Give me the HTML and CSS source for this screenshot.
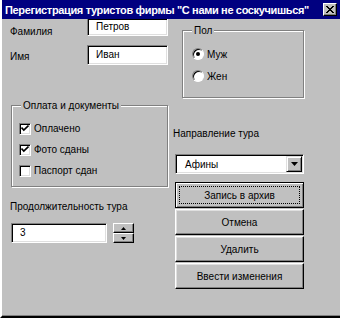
FILE: index.html
```html
<!DOCTYPE html>
<html lang="ru">
<head>
    <meta charset="UTF-8">
    <title>Регистрация туристов</title>
    <link rel="stylesheet" href="styles.css">
</head>
<body>
<div class="window">
    <div class="titlebar">
        <span class="title">Перегистрация туристов фирмы "С нами не соскучишься"</span>
        <span class="close-btn">
            <svg width="8" height="7" viewBox="0 0 8 7"><path d="M0 0 L7 7 M1 0 L8 7 M7 0 L0 7 M8 0 L1 7" stroke="#000" stroke-width="1" fill="none"/></svg>
        </span>
    </div>

    <div class="client">
        <!-- left column -->
        <div class="col-left">
            <div class="row row-surname">
                <span class="label">Фамилия</span>
                <div class="field field-top">Петров</div>
            </div>
            <div class="row row-name">
                <span class="label">Имя</span>
                <div class="field">Иван</div>
            </div>

            <div class="group group-pay">
                <span class="legend">Оплата и документы</span>
                <div class="check-row">
                    <span class="checkbox checked"><svg width="8" height="7" viewBox="0 0 8 7"><path d="M0.5 2.5 L2.8 5 L7.5 0.5" stroke="#000" stroke-width="1.6" fill="none"/></svg></span>
                    <span>Оплачено</span>
                </div>
                <div class="check-row">
                    <span class="checkbox checked"><svg width="8" height="7" viewBox="0 0 8 7"><path d="M0.5 2.5 L2.8 5 L7.5 0.5" stroke="#000" stroke-width="1.6" fill="none"/></svg></span>
                    <span>Фото сданы</span>
                </div>
                <div class="check-row">
                    <span class="checkbox"></span>
                    <span>Паспорт сдан</span>
                </div>
            </div>

            <div class="label label-duration">Продолжительность тура</div>
            <div class="row row-duration">
                <div class="field field-num">3</div>
                <div class="spinner">
                    <span class="spin-btn"><svg width="5" height="3" viewBox="0 0 5 3"><path d="M2.5 0 L5 3 L0 3 Z" fill="#000"/></svg></span>
                    <span class="spin-btn"><svg width="5" height="3" viewBox="0 0 5 3"><path d="M0 0 L5 0 L2.5 3 Z" fill="#000"/></svg></span>
                </div>
            </div>
        </div>

        <!-- right column -->
        <div class="col-right">
            <div class="group group-sex">
                <span class="legend">Пол</span>
                <div class="radio-row">
                    <span class="radio checked"></span>
                    <span>Муж</span>
                </div>
                <div class="radio-row">
                    <span class="radio"></span>
                    <span>Жен</span>
                </div>
            </div>

            <div class="label label-direction">Направление тура</div>
            <div class="select">
                <span class="select-value">Афины</span>
                <span class="select-arrow"><svg width="7" height="4" viewBox="0 0 7 4"><path d="M0 0 L7 0 L3.5 4 Z" fill="#000"/></svg></span>
            </div>

            <div class="buttons">
                <div class="btn btn-default"><span class="focus">Запись в архив</span></div>
                <div class="btn">Отмена</div>
                <div class="btn">Удалить</div>
                <div class="btn">Ввести изменения</div>
            </div>
        </div>
    </div>
</div>
</body>
</html>
```

FILE: styles.css
```css
body {
    margin: 0;
    background: #c0c0c0;
    font-family: 'Liberation Sans', Arial, sans-serif;
    font-size: 10px;
    color: #000;
}

.window {
    width: 340px;
    height: 318px;
    box-sizing: border-box;
    background: #c0c0c0;
    border-left: 2px solid #fff;
    border-bottom: 2px solid #000;
    box-shadow: inset 0 -1px #808080;
    overflow: hidden;
}

.titlebar {
    height: 19px;
    margin-left: -2px;
    background: #000080;
    display: flex;
    align-items: center;
    justify-content: space-between;
    padding: 0 3px 0 5px;
}

.title {
    color: #fff;
    font-weight: bold;
    font-size: 11px;
    letter-spacing: -0.35px;
    white-space: nowrap;
    min-width: 0;
}

.close-btn {
    flex: none;
    width: 14px;
    height: 13px;
    box-sizing: border-box;
    background: #c0c0c0;
    border: 1px solid;
    border-color: #fff #000 #000 #fff;
    box-shadow: inset -1px -1px #808080;
    display: flex;
    align-items: center;
    justify-content: center;
}

.client {
    display: flex;
    gap: 7px;
    padding-left: 8px;
}

.col-left {
    width: 158px;
    display: flex;
    flex-direction: column;
}

.col-right {
    width: 129px;
    display: flex;
    flex-direction: column;
}

.row {
    display: flex;
    align-items: flex-start;
}

.label {
    line-height: 13px;
    white-space: nowrap;
}

.row .label {
    width: 77px;
}

.row-surname .label {
    padding-top: 6px;
}

.row-name {
    margin-top: 7px;
}

.row-name .label {
    padding-top: 5px;
}

/* sunken edit box */
.field {
    width: 81px;
    height: 20px;
    box-sizing: border-box;
    background: #fff;
    border: 1px solid;
    border-color: #808080 #fff #fff #808080;
    box-shadow: inset 1px 1px #000, inset -1px -1px #dfdfdf;
    padding: 2px 0 0 8px;
    line-height: 14px;
}

.field-top {
    height: 17px;
    border-top: none;
    padding-top: 1px;
}

/* etched group box */
.group {
    position: relative;
    border: 1px solid #808080;
    box-shadow: inset 1px 1px #fff, 1px 1px #fff;
}

.legend {
    position: absolute;
    top: -7px;
    left: 9px;
    padding: 0 2px;
    background: #c0c0c0;
    line-height: 13px;
}

.group-pay {
    margin: 40px 0 0 1px;
    height: 82px;
    box-sizing: border-box;
    padding: 12px 0 0 7px;
}

.check-row,
.radio-row {
    display: flex;
    align-items: center;
    gap: 3px;
    height: 21px;
}

.checkbox {
    width: 12px;
    height: 12px;
    box-sizing: border-box;
    background: #fff;
    border: 1px solid;
    border-color: #808080 #fff #fff #808080;
    box-shadow: inset 1px 1px #000, inset -1px -1px #dfdfdf;
    display: flex;
    align-items: center;
    justify-content: center;
}

.label-duration {
    margin-top: 13px;
}

.row-duration {
    margin: 10px 0 0 1px;
    gap: 6px;
}

.field-num {
    width: 96px;
    padding-left: 8px;
}

.spinner {
    width: 21px;
    height: 20px;
    display: flex;
    flex-direction: column;
}

.spin-btn {
    flex: 1;
    box-sizing: border-box;
    border: 1px solid;
    border-color: #fff #000 #000 #fff;
    box-shadow: inset -1px -1px #808080;
    display: flex;
    align-items: center;
    justify-content: center;
}

.group-sex {
    margin: 11px 0 0 7px;
    height: 68px;
    box-sizing: border-box;
    padding: 12px 0 0 9px;
}

.radio-row {
    height: 22px;
}

.radio {
    width: 12px;
    height: 12px;
    box-sizing: border-box;
    border-radius: 50%;
    background: #fff;
    border: 1px solid;
    border-color: #808080 #fff #fff #808080;
    box-shadow: inset 1px 1px #000;
    display: flex;
    align-items: center;
    justify-content: center;
}

.radio.checked::after {
    content: '';
    width: 4px;
    height: 4px;
    border-radius: 50%;
    background: #000;
}

.label-direction {
    margin: 29px 0 0 -2px;
}

.select {
    margin-top: 14px;
    height: 20px;
    box-sizing: border-box;
    background: #fff;
    border: 1px solid;
    border-color: #808080 #fff #fff #808080;
    box-shadow: inset 1px 1px #000, inset -1px -1px #dfdfdf;
    display: flex;
    align-items: center;
    justify-content: space-between;
    padding: 1px 1px 1px 9px;
}

.select-arrow {
    width: 16px;
    height: 16px;
    box-sizing: border-box;
    background: #c0c0c0;
    border: 1px solid;
    border-color: #dfdfdf #000 #000 #dfdfdf;
    box-shadow: inset 1px 1px #fff, inset -1px -1px #808080;
    display: flex;
    align-items: center;
    justify-content: center;
}

.buttons {
    margin-top: 8px;
    display: flex;
    flex-direction: column;
    gap: 1px;
}

.btn {
    height: 26px;
    box-sizing: border-box;
    border: 1px solid;
    border-color: #fff #000 #000 #fff;
    box-shadow: inset -1px -1px #808080, inset 1px 1px #dfdfdf;
    display: flex;
    align-items: center;
    justify-content: center;
}

.btn-default {
    border: 1px solid #000;
    box-shadow: inset 1px 1px #fff, inset -1px -1px #808080;
    padding: 3px;
}

.focus {
    flex: 1;
    align-self: stretch;
    border: 1px dotted #000;
    display: flex;
    align-items: center;
    justify-content: center;
}
```
